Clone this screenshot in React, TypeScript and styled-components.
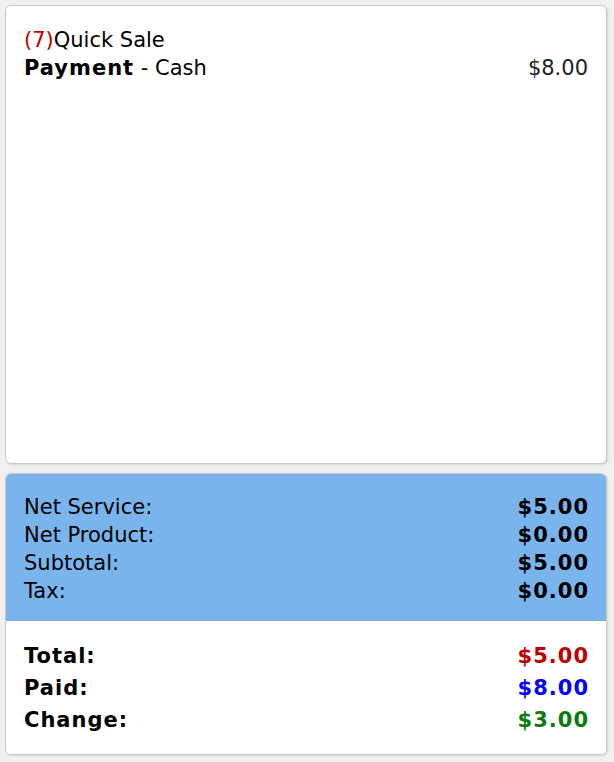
import styled, { createGlobalStyle } from "styled-components";

const GlobalStyle = createGlobalStyle`
  html, body {
    margin: 0;
    padding: 0;
    background: #f0f0f0;
  }
  body {
    font-family: "DejaVu Sans", "Liberation Sans", sans-serif;
    font-size: 21px;
    color: #000;
  }
`;

const Page = styled.div`
  display: flex;
  flex-direction: column;
  gap: 9px;
  padding: 5px 7px 7px 5px;
  height: 762px;
  box-sizing: border-box;
`;

const Card = styled.div<{ $grow?: boolean }>`
  background: #fff;
  border: 1px solid #c9c9c9;
  border-radius: 6px;
  box-shadow: 1px 1px 2px rgba(0, 0, 0, 0.12);
  overflow: hidden;
  flex: ${(p) => (p.$grow ? "1 1 auto" : "0 0 auto")};
`;

const Ticket = styled.div`
  padding: 20px 18px;
  line-height: 28px;
`;

const Line = styled.div`
  display: flex;
  justify-content: space-between;
`;

const Count = styled.span`
  color: #c40000;
`;

const Amount = styled.span`
  color: #222;
`;

const Summary = styled.div<{ $tone: "blue" | "white" }>`
  background: ${(p) => (p.$tone === "blue" ? "#7ab4ec" : "#fff")};
  padding: ${(p) => (p.$tone === "blue" ? "19px 18px 16px" : "19px 18px 18px")};
  line-height: ${(p) => (p.$tone === "blue" ? "28px" : "32px")};
`;

const Label = styled.span<{ $bold?: boolean }>`
  font-weight: ${(p) => (p.$bold ? 700 : 400)};
  letter-spacing: ${(p) => (p.$bold ? "1px" : "0")};
`;

const Value = styled.span<{ $color?: string }>`
  font-weight: 700;
  letter-spacing: 1px;
  margin-right: -1px;
  color: ${(p) => p.$color || "#000"};
`;

const subtotals = [
  ["Net Service:", "$5.00"],
  ["Net Product:", "$0.00"],
  ["Subtotal:", "$5.00"],
  ["Tax:", "$0.00"],
];

const totals = [
  ["Total:", "$5.00", "#c00000"],
  ["Paid:", "$8.00", "#0000ff"],
  ["Change:", "$3.00", "#0a7a0a"],
];

export default function App() {
  return (
    <>
      <GlobalStyle />
      <Page>
        <Card $grow>
          <Ticket>
            <div>
              <Count>(7)</Count>Quick Sale
            </div>
            <Line>
              <span>
                <Label $bold>Payment</Label> - Cash
              </span>
              <Amount>$8.00</Amount>
            </Line>
          </Ticket>
        </Card>
        <Card>
          <Summary $tone="blue">
            {subtotals.map(([label, value]) => (
              <Line key={label}>
                <Label>{label}</Label>
                <Value>{value}</Value>
              </Line>
            ))}
          </Summary>
          <Summary $tone="white">
            {totals.map(([label, value, color]) => (
              <Line key={label}>
                <Label $bold>{label}</Label>
                <Value $color={color}>{value}</Value>
              </Line>
            ))}
          </Summary>
        </Card>
      </Page>
    </>
  );
}
